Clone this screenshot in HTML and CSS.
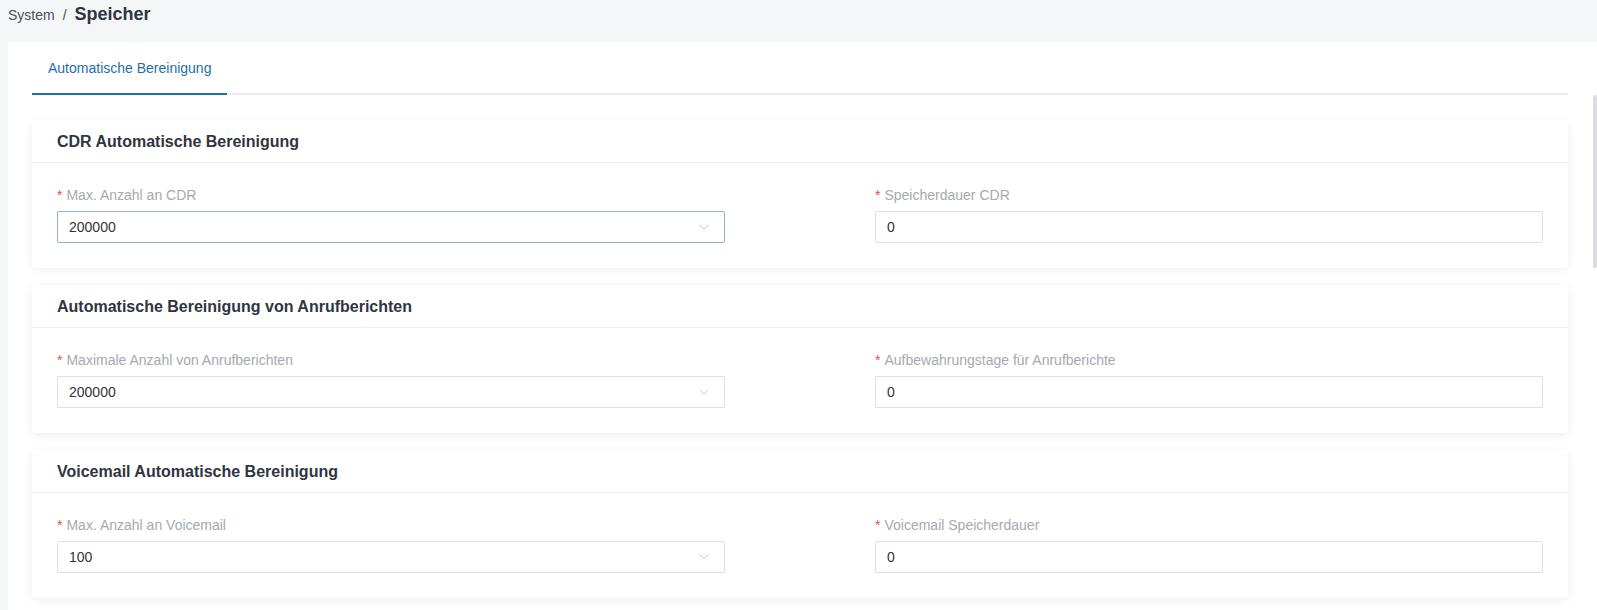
FILE: index.html
```html
<!DOCTYPE html>
<html lang="de">
<head>
    <meta charset="UTF-8">
    <meta name="viewport" content="width=device-width, initial-scale=1.0">
    <title>Speicher</title>
    <link rel="stylesheet" href="styles.css">
</head>
<body>
    <div class="page-header">
        <span class="crumb">System</span>
        <span class="crumb-sep">/</span>
        <span class="crumb-current">Speicher</span>
    </div>

    <div class="panel">
        <div class="tabs">
            <div class="tab active">Automatische Bereinigung</div>
        </div>

        <div class="card">
            <div class="card-header">CDR Automatische Bereinigung</div>
            <div class="card-body">
                <div class="form-item">
                    <label class="form-label"><span class="req">*</span>Max. Anzahl an CDR</label>
                    <div class="select is-hover">
                        <span>200000</span>
                        <svg class="chevron" viewBox="0 0 10 6" width="10" height="6"><path d="M0.5 0.5 L5 5 L9.5 0.5" fill="none" stroke="#c8cbd1" stroke-width="1"/></svg>
                    </div>
                </div>
                <div class="form-item">
                    <label class="form-label"><span class="req">*</span>Speicherdauer CDR</label>
                    <div class="input">0</div>
                </div>
            </div>
        </div>

        <div class="card">
            <div class="card-header">Automatische Bereinigung von Anrufberichten</div>
            <div class="card-body">
                <div class="form-item">
                    <label class="form-label"><span class="req">*</span>Maximale Anzahl von Anrufberichten</label>
                    <div class="select">
                        <span>200000</span>
                        <svg class="chevron" viewBox="0 0 10 6" width="10" height="6"><path d="M0.5 0.5 L5 5 L9.5 0.5" fill="none" stroke="#c8cbd1" stroke-width="1"/></svg>
                    </div>
                </div>
                <div class="form-item">
                    <label class="form-label"><span class="req">*</span>Aufbewahrungstage für Anrufberichte</label>
                    <div class="input">0</div>
                </div>
            </div>
        </div>

        <div class="card">
            <div class="card-header">Voicemail Automatische Bereinigung</div>
            <div class="card-body">
                <div class="form-item">
                    <label class="form-label"><span class="req">*</span>Max. Anzahl an Voicemail</label>
                    <div class="select">
                        <span>100</span>
                        <svg class="chevron" viewBox="0 0 10 6" width="10" height="6"><path d="M0.5 0.5 L5 5 L9.5 0.5" fill="none" stroke="#c8cbd1" stroke-width="1"/></svg>
                    </div>
                </div>
                <div class="form-item">
                    <label class="form-label"><span class="req">*</span>Voicemail Speicherdauer</label>
                    <div class="input">0</div>
                </div>
            </div>
        </div>

        <div class="scroll-thumb"></div>
    </div>
</body>
</html>
```

FILE: styles.css
```css
* {
    margin: 0;
    padding: 0;
    box-sizing: border-box;
}

body {
    font-family: 'Liberation Sans', Arial, sans-serif;
    background-color: #f5f6f8;
    color: #333;
    height: 610px;
    overflow: hidden;
}

/* breadcrumb */
.page-header {
    height: 42px;
    padding: 3px 8px 0;
    display: flex;
    align-items: baseline;
    line-height: 22px;
}

.crumb {
    font-size: 14px;
    color: #4a4f58;
}

.crumb-sep {
    font-size: 14px;
    color: #4a4f58;
    margin: 0 8px;
}

.crumb-current {
    font-size: 18px;
    font-weight: bold;
    color: #303540;
}

/* main panel */
.panel {
    position: relative;
    margin-left: 8px;
    background: #fff;
    padding: 0 29px 0 24px;
    height: 568px;
}

.tabs {
    display: flex;
    height: 53px;
    border-bottom: 2px solid #e9ebef;
    margin-bottom: 25px;
}

.tab {
    padding: 0 16px;
    font-size: 14px;
    color: #555;
}

.tab.active {
    color: #1f6fa7;
    border-bottom: 2px solid #1f6fa7;
    margin-bottom: -2px;
    line-height: 53px;
    height: 53px;
}

/* cards */
.card {
    background: #fff;
    border-radius: 4px;
    box-shadow: 0 2px 10px rgba(0, 0, 0, 0.07);
    margin-bottom: 17px;
}

.card-header {
    height: 43px;
    line-height: 43px;
    padding: 0 25px;
    font-size: 16px;
    font-weight: bold;
    color: #303540;
    border-bottom: 1px solid #ebedf0;
}

.card-body {
    display: grid;
    grid-template-columns: 1fr 1fr;
    column-gap: 150px;
    padding: 22px 25px 25px;
}

.form-label {
    display: block;
    font-size: 14px;
    line-height: 20px;
    color: #a6a9b0;
    margin-bottom: 6px;
}

.req {
    color: #e4503f;
    margin-right: 4px;
}

.input,
.select {
    height: 32px;
    border: 1px solid #dcdfe6;
    border-radius: 2px;
    padding: 0 11px;
    font-size: 14px;
    line-height: 30px;
    color: #333;
    display: flex;
    align-items: center;
    justify-content: space-between;
}

.select.is-hover {
    border-color: #8fb2cf;
}

.chevron {
    margin-right: 4px;
}

.scroll-thumb {
    position: absolute;
    right: 0;
    top: 53px;
    width: 4px;
    height: 173px;
    border-radius: 2px;
    background: #dcdde0;
}
```
